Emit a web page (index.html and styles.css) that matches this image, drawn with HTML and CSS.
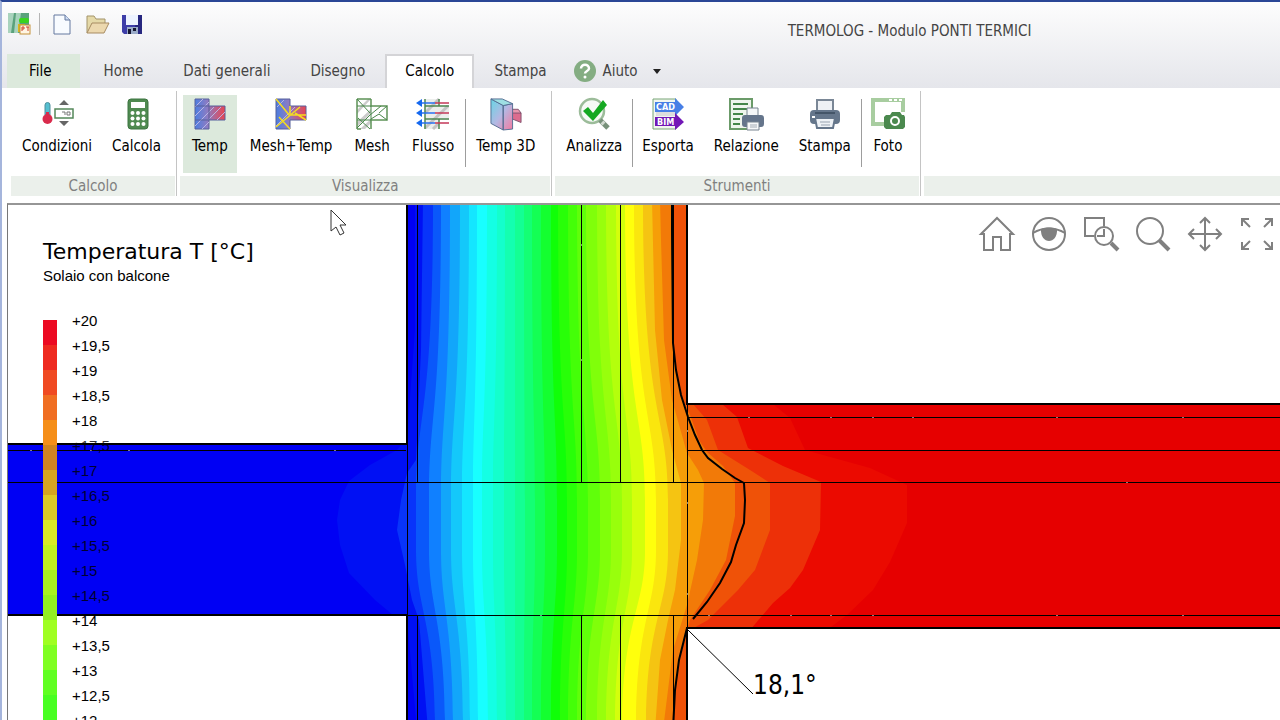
FILE: index.html
```html
<!DOCTYPE html>
<html lang="it">
<head>
<meta charset="utf-8">
<title>TERMOLOG - Modulo PONTI TERMICI</title>
<link rel="stylesheet" href="styles.css">
</head>
<body>
<div class="window">
  <header class="titlebar">
    <div class="quick">
      <svg class="app-logo" viewBox="0 0 24 24" width="24" height="24" role="img" aria-label="Termolog">
        <path d="M0 1h21v20H0z" fill="#5aa27c"/><path d="M0 1h6L3 21H0zM8 1h5l-3 20H6z" fill="#a9d3bd"/>
        <rect x="11" y="6" width="10" height="5" rx="2" fill="#39d41f"/><rect x="10" y="12" width="7" height="8" fill="#d8b81d"/>
        <rect x="12" y="13" width="10" height="9" fill="#fff5e3" stroke="#c4923b"/><path d="M14 19v-4h2v2h-2M18 15h3m-1 0v4" stroke="#cf432c" fill="none"/>
      </svg>
      <span class="quick-rule"></span>
      <button class="quick-btn" aria-label="Nuovo"><svg viewBox="0 0 24 24" width="24" height="24"><path d="M4 3h11l5 5v14H4z" fill="#f8fbff" stroke="#65789f"/><path d="M15 3v5h5" fill="#cddbf2" stroke="#65789f"/></svg></button>
      <button class="quick-btn" aria-label="Apri"><svg viewBox="0 0 24 24" width="24" height="24"><path d="M2 21V4h7l2 3h9v4" fill="#e5d9a8" stroke="#a3946b"/><path d="M2 21 7 11h17l-5 10z" fill="#ecd8ae" stroke="#a78b62"/></svg></button>
      <button class="quick-btn" aria-label="Salva"><svg viewBox="0 0 24 24" width="24" height="24"><path d="M2 3h20v19H4l-2-2z" fill="#3d3da8"/><path d="M18 3h4v19h-9z" fill="#27277f"/><path d="M6 3h12v10H6z" fill="#edf3ff"/><path d="M7 15h11v7H7z" fill="#9bacc9"/><path d="M8 17h3v5H8zM13 16h3v3h-3z" fill="#171733"/></svg></button>
    </div>
    <h1 class="title">TERMOLOG - Modulo PONTI TERMICI</h1>
  </header>

  <nav class="tabs">
    <button class="tab tab-file">File</button>
    <button class="tab">Home</button>
    <button class="tab">Dati generali</button>
    <button class="tab">Disegno</button>
    <button class="tab tab-active">Calcolo</button>
    <button class="tab">Stampa</button>
    <button class="tab tab-help">
      <svg viewBox="0 0 24 24" width="24" height="24"><circle cx="12" cy="12" r="11" fill="#84ad82"/><path d="M8 9.500c0-5 8-5 8 0 0 2.500-4 2.500-4 5" fill="none" stroke="#fff" stroke-width="2.500"/><circle cx="12" cy="18" r="1.500" fill="#fff"/></svg>
      Aiuto
      <svg class="caret" viewBox="0 0 8 5" width="8" height="5"><path d="M0 0h8L4 5z" fill="#222"/></svg>
    </button>
  </nav>

  <div class="ribbon">
    <section class="group">
      <div class="tools">
        <button class="tool"><svg viewBox="0 0 32 32" width="32" height="32"><path d="M4 7a2.500 2.500 0 0 1 5 0v10H4z" fill="#55bfd0" stroke="#4e8e9c"/><circle cx="6.500" cy="21" r="5" fill="#d92b4c"/><path d="M5 14h3v6H5z" fill="#d92b4c"/><path d="M23 2l5 5H18zM18 23h10l-5 5z" fill="#666"/><rect x="14" y="11" width="18" height="9" fill="#fff" stroke="#54885a" stroke-width="1.500"/><path d="M21 14h3v3m2-3h3v3h-3z" fill="none" stroke="#777"/></svg>Condizioni</button>
        <button class="tool"><svg viewBox="0 0 32 32" width="32" height="32"><rect x="7" y="1" width="20" height="30" rx="3" fill="#4f8a50" stroke="#3c7440"/><rect x="10" y="4" width="14" height="6" fill="#fff"/><g fill="#fff"><circle cx="11.500" cy="15" r="2"/><circle cx="17" cy="15" r="2"/><circle cx="22.500" cy="15" r="2"/><circle cx="11.500" cy="20.500" r="2"/><circle cx="17" cy="20.500" r="2"/><circle cx="22.500" cy="20.500" r="2"/><circle cx="11.500" cy="26" r="2"/><circle cx="17" cy="26" r="2"/><circle cx="22.500" cy="26" r="2"/></g></svg>Calcola</button>
      </div>
      <h2 class="group-name">Calcolo</h2>
    </section>

    <section class="group group-wide">
      <div class="tools">
        <button class="tool tool-on"><svg viewBox="0 0 32 32" width="32" height="32"><defs><linearGradient id="heat"><stop offset="0" stop-color="#4c7ee0"/><stop offset=".4" stop-color="#8a7cc4"/><stop offset="1" stop-color="#ea4450"/></linearGradient></defs><path d="M1 1h14v7h16v14H15v9H1z" fill="url(#heat)" stroke="#57619c"/><path d="M1 9l8-8M1 18 15 4M1 28 20 9M8 31l7-7M14 22 27 9M23 22l8-8" stroke="#b8b5e4"/><path d="M1 8h14v14H1" fill="none" stroke="#57619c"/></svg>Temp</button>
        <button class="tool"><svg viewBox="0 0 32 32" width="32" height="32"><path d="M1 1h14v7h16v14H15v9H1z" fill="url(#heat)" stroke="#57619c"/><path d="M1 28 20 9M2 9l7-7" stroke="#b8b5e4"/><path d="M1 1l14 17M1 29 25 9M4 19l11 12M14 17h17M20 15l11 7M15 8v8" fill="none" stroke="#f5dc20" stroke-width="1.500"/></svg>Mesh+Temp</button>
        <button class="tool"><svg viewBox="0 0 32 32" width="32" height="32"><path d="M1 12 12 1h3L1 16zM1 24 15 11v4L1 29zM4 31l11-10v4l-6 6z" fill="#ccc"/><path d="M1 31V1M1 1h14M1 31h4M15 31v-9h16V8H15V1" fill="none" stroke="#5d9357" stroke-width="1.500"/><path d="M1 1l13 14M1 30 14 17 25 8M2 20l12 11M1 8h14v14H1M15 21l8-5 8 6M23 15l8-7" fill="none" stroke="#48864a"/></svg>Mesh</button>
        <button class="tool"><svg viewBox="0 0 32 32" width="32" height="32"><path d="M8 1h14v30H8zM22 8h10v14H22z" fill="#eceeec"/><path d="M8 15 22 1M8 30 31 8M16 31l6-6" stroke="#c4c4c4" stroke-width="3"/><path d="M8 1v30M22 1v7h10M8 8h14M8 21h24M22 21v10" fill="none" stroke="#4c8550" stroke-width="1.500"/><path d="M5 5h13M5 15h13M5 25h13" stroke="#2870ef" stroke-width="1.500"/><path d="M18 5h14M18 15h14M18 25h14" stroke="#c33958" stroke-width="1.500"/><path d="M-1 5l6-4v8zM-1 15l6-4v8zM-1 25l6-4v8z" fill="#1468ef"/></svg>Flusso</button>
        <span class="tool-rule"></span>
        <button class="tool"><svg viewBox="0 0 34 34" width="34" height="34"><defs><linearGradient id="solid" x2="1" y2="1"><stop offset="0" stop-color="#67d6e4"/><stop offset=".5" stop-color="#b4b8e3"/><stop offset="1" stop-color="#f57a9f"/></linearGradient></defs><path d="M23 12l10 4v10l-10-4z" fill="#dd6c8e" stroke="#81516d"/><path d="M23 12h7l3 4H23z" fill="#e997ae" stroke="#81516d"/><path d="M1 1l13 7v26L1 27zM14 8l10-2v27l-10 1z" fill="url(#solid)" stroke="#526c91"/><path d="M1 1h12l11 5-10 2z" fill="#9edfe3" stroke="#526c91"/></svg>Temp 3D</button>
      </div>
      <h2 class="group-name">Visualizza</h2>
    </section>

    <section class="group">
      <div class="tools">
        <button class="tool"><svg viewBox="0 0 32 32" width="32" height="32"><circle cx="14" cy="13" r="12" fill="#f6f9f6" stroke="#9cbc9a" stroke-width="2.500"/><path d="M22 22l8 8" stroke="#77917a" stroke-width="5"/><path d="M24 24l2 2" stroke="#d1d9d0" stroke-width="4"/><path d="M5 13l5-4 5 6L25 2l4 5-14 16z" fill="#15a822"/></svg>Analizza</button>
        <span class="tool-rule"></span>
        <button class="tool"><svg viewBox="0 0 32 32" width="32" height="32"><path d="M1 1h23v30H1z" fill="#f1f6ef" stroke="#79a577"/><path d="M4 14h19v4H4z" fill="#ddd"/><path d="M3 4h20V0l9 9-9 9v-4H3z" fill="#477fe6"/><path d="M3 19h20v-4l9 9-9 8v-4H3z" fill="#7217b6"/><g class="badge-text"><text x="4" y="12">CAD</text><text x="5" y="27">BIM</text></g></svg>Esporta</button>
        <button class="tool"><svg viewBox="0 0 36 32" width="36" height="32"><path d="M2 1h22v30H2z" fill="#eff5ed" stroke="#6b9b69" stroke-width="2"/><path d="M5 6h15M5 11h15M5 16h10M5 21h7M5 26h7" stroke="#458649" stroke-width="2"/><path d="M19 10h11v9H19z" fill="#f5f7f8" stroke="#798490"/><rect x="14" y="17" width="22" height="12" rx="3" fill="#65758b"/><path d="M19 24h12v8H19z" fill="#f7f8f9" stroke="#798490"/><path d="M22 27h7m-7 2h7" stroke="#a4acb5"/></svg>Relazione</button>
        <button class="tool"><svg viewBox="0 0 32 32" width="32" height="32"><path d="M8 2h16v13H8z" fill="#eef1f5" stroke="#7a8796" stroke-width="2"/><rect x="1" y="12" width="30" height="14" rx="4" fill="#65768b"/><path d="M6 20h20l-2 10H8z" fill="#eef2f6" stroke="#65768b" stroke-width="2"/><path d="M11 24h10m-9 3h9" stroke="#97a2b0"/><path d="M3 18h3v2H3z" fill="#fff"/><path d="M6 15h20" stroke="#445568" stroke-width="2"/></svg>Stampa</button>
        <span class="tool-rule"></span>
        <button class="tool"><svg viewBox="0 0 34 32" width="34" height="32"><path d="M2 13V2h30v12M2 2v24h11" fill="none" stroke="#a8cda0" stroke-width="4"/><path d="M18 2h3m2 0h3m2 0h3" stroke="#fff" stroke-width="2"/><path d="M15 17h4l2-3h8l2 3h2l1 2v10l-2 2H15l-2-2V19z" fill="#4b894e"/><circle cx="24" cy="23" r="4" fill="#4b894e" stroke="#fff" stroke-width="2"/></svg>Foto</button>
      </div>
      <h2 class="group-name">Strumenti</h2>
    </section>
    <section class="group group-rest"><div class="tools"></div><div class="group-name"></div></section>
  </div>

  <main class="canvas">
    <svg class="plot" viewBox="8 205 1272 515" preserveAspectRatio="xMinYMin slice" role="img" aria-label="Campo di temperatura del solaio con balcone">
      <defs><clipPath id="section"><path d="M8 444H406V200H687V404H1290V628H687V730H406V615H8z"/></clipPath></defs>
      <g clip-path="url(#section)"><rect x="8" y="200" width="1280" height="530" fill="#0000f4"/><g id="bands"></g></g>
      <path class="lines" d="M8 482.500H1290M8 450.500H406M687 417.500H1290M687 450.500H1290M407 615.500H1290M417.500 200V482M417.500 615V730M581.500 200V482M581.500 615V730M620.500 200V482M620.500 615V730M673.500 200V482M673.500 615V730M407.500 444V615M687.500 404V628"/>
      <path class="joints" d="M30 450.500h2M90 450.500h2M128 450.500h2M334 450.500h2M748 417.500h2M830 417.500h2M872 417.500h2M912 417.500h2M708 615.500h2M790 615.500h2M830 615.500h2M872 615.500h2M1056 417.500h2M1182 417.500h2M1056 615.500h2M1182 615.500h2M1126 482.500h2M540 615.500h2M581.500 244v2M581.500 359v2M687.500 430v2M687.500 502v2M687.500 593v2"/>
      <path class="outline" d="M8 444H407V200M687 200V404H1290M1290 628H687V730M407 730V615H8"/>
      <path class="isotherm" d="M672 200V230L673 343 676 370 681 395 688 417 695 435 702 450 708 458 722 469 735 478 744 483 745 500 744 523 736 545 731 562 720 583 707 602 693 619M687 628L679 660 675 690 673 730"/>
      <path d="M687 629L753 694" stroke="#000" fill="none"/>
      <text class="reading" x="753" y="694">18,1°</text>
    </svg>

    <div class="legend">
      <h2 class="legend-title">Temperatura T [°C]</h2>
      <p class="legend-sub">Solaio con balcone</p>
      <div class="scale">
        <div class="swatches" id="swatches"></div>
        <ul class="values">
          <li>+20</li><li>+19,5</li><li>+19</li><li>+18,5</li><li>+18</li><li class="dim">+17,5</li><li class="dim">+17</li><li class="dim">+16,5</li><li class="dim">+16</li><li class="dim">+15,5</li><li class="dim">+15</li><li class="dim">+14,5</li><li>+14</li><li>+13,5</li><li>+13</li><li>+12,5</li><li>+12</li>
        </ul>
      </div>
    </div>

    <div class="view-tools">
      <button aria-label="Inizio"><svg viewBox="0 0 36 36"><path d="M2 18 18 2l16 16h-3v16h-9V21h-8v13H5V18z"/></svg></button>
      <button aria-label="Vista"><svg viewBox="0 0 36 36"><circle cx="18" cy="18" r="16"/><path d="M2 17c10-6 22-6 32 0"/><path class="full" d="M10 13c5-2 11-2 16 0 1 16-17 16-16 0z"/></svg></button>
      <button aria-label="Zoom finestra"><svg viewBox="0 0 36 36"><path d="M11 20H2V2h19v8M14 20h7v-7"/><circle cx="21" cy="20" r="9"/><path class="thick" d="M28 27l7 7"/></svg></button>
      <button aria-label="Zoom"><svg viewBox="0 0 36 36"><circle cx="15" cy="15" r="13"/><path class="thick" d="M24 24l10 10"/></svg></button>
      <button aria-label="Sposta"><svg viewBox="0 0 36 36"><path d="M18 2v32M2 18h32M13 7l5-5 5 5M13 29l5 5 5-5M7 13l-5 5 5 5M29 13l5 5-5 5"/></svg></button>
      <button aria-label="Adatta"><svg viewBox="0 0 36 36"><g class="heavy"><path d="M11 11 3 3M3 10V3h7M25 11l8-8M26 3h7v7M11 25l-8 8M3 26v7h7M25 25l8 8M26 33h7v-7"/></g></svg></button>
    </div>
    <svg class="pointer" viewBox="0 0 18 28" width="18" height="28"><path d="M1 1v21l5-4 4 8 4-2-4-8h6z" fill="#fff" stroke="#333"/></svg>
  </main>
</div>
<script src="plot.js"></script>
</body>
</html>
```

FILE: styles.css
```css
* { box-sizing: border-box; }
body { margin: 0; font-family: "DejaVu Sans Condensed", "DejaVu Sans", sans-serif; font-size: 15px; color: #111; }
button { border: 0; padding: 0; background: none; font: inherit; color: inherit; }
h1, h2, p, ul { margin: 0; padding: 0; font-weight: normal; list-style: none; }
svg { display: block; overflow: visible; }

.window { display: flex; flex-direction: column; height: 100vh; overflow: hidden; border-top: 2px solid #2b4796; border-left: 2px solid #a5b5dc; background: linear-gradient(#fdfdfd, #e5e6eb 86px, #fff 86px); }
.titlebar { display: flex; align-items: center; height: 52px; padding-left: 6px; }
.quick { display: flex; align-items: center; height: 44px; align-self: start; }
.quick-rule { width: 1px; height: 22px; margin: 0 10px 0 7px; background: #b5b5b5; }
.quick-btn { margin-right: 11px; }
.title { flex: 1; padding: 5px 100px 0 484px; text-align: center; font-size: 15px; color: #444; white-space: nowrap; }

.tabs { display: flex; height: 34px; padding-left: 5px; color: #444; }
.tab { padding: 0 20px; white-space: nowrap; }
.tab-file { padding: 0 29px 0 22px; background: #dce9dc; color: #000; margin-right: 3px; }
.tab-active { border: 2px solid #d4d4d7; border-bottom: 0; padding: 0 18px 2px; background: #fff; color: #000; }
.tab-help { display: flex; align-items: center; gap: 6px; padding-left: 6px; }
.caret { margin-left: 9px; }

.ribbon { display: flex; height: 115px; padding: 3px 0 7px 9px; background: #fff; }
.group { display: flex; flex-direction: column; justify-content: space-between; border-right: 1px solid #c4c4c4; margin-right: 3px; padding-right: 1px; }
.group-rest { flex: 1; border: 0; margin: 0; padding: 0; }
.tools { display: flex; gap: 4px; padding: 4px 6px 0 3px; height: 82px; }
.tool { display: flex; flex-direction: column; align-items: center; gap: 7px; padding: 3px 8px 0; height: 78px; white-space: nowrap; line-height: 18px; color: #000; }
.group-wide .tool { padding: 3px 9px 0; }
.tool svg { height: 32px; }
.tool-on { background: #dce9dc; }
.tool-rule { width: 1px; margin: 4px -3px 6px -2px; background: #9d9d9d; }
.group-name { height: 20px; background: #ebf0eb; color: #808080; font-size: 15px; line-height: 20px; text-align: center; }
.badge-text { font: bold 9px "DejaVu Sans Condensed", sans-serif; fill: #fff; }

.canvas { position: relative; flex: 1; min-height: 0; margin-left: 5px; overflow: hidden; border-top: 2px solid #969696; border-left: 1px solid #777; background: #fff; }
.plot { width: 100%; height: 100%; }
.lines { fill: none; stroke: #000; shape-rendering: crispEdges; }
.joints { stroke: #fff; stroke-opacity: .5; }
.outline { fill: none; stroke: #000; stroke-width: 2; }
.isotherm { fill: none; stroke: #000; stroke-width: 2; }
.reading { font-size: 26px; fill: #000; }

.legend { position: absolute; top: 33px; left: 35px; font-family: "Liberation Sans", sans-serif; color: #000; }
.legend-title { font-family: "DejaVu Sans", sans-serif; font-size: 22px; line-height: 28px; white-space: nowrap; }
.legend-sub { font-size: 15px; line-height: 20px; }
.scale { display: flex; gap: 15px; margin-top: 22px; font-size: 15px; }
.swatches { width: 14px; padding-top: 12px; }
.swatch { height: 25px; }
.values li { height: 25px; line-height: 25px; }
.dim { opacity: .8; }

.view-tools { position: absolute; top: 11px; right: 5px; display: flex; gap: 16px; }
.view-tools svg { width: 36px; height: 36px; fill: none; stroke: #808080; stroke-width: 2; }
.view-tools .full { fill: #808080; stroke: none; }
.view-tools .thick { stroke-width: 4; }
.view-tools .heavy { stroke-width: 2; }
.pointer { position: absolute; left: 322px; top: 4px; }
```

FILE: plot.js
```js
// Isotherm bands of the wall: [x at the top, x at slab level, x at the bottom, colour]
const wall = [
  [433, 416, 435, '#0a58fa'], [441, 429, 445, '#1080ff'], [450, 441, 453, '#12a6fa'],
  [460, 451, 463, '#14c8fa'], [469, 462, 470, '#14e6ff'], [477, 473, 478, '#18ffff'],
  [487, 482, 488, '#14ffe4'], [497, 493, 497, '#14ffcc'], [505, 504, 506, '#14ffb0'],
  [515, 515, 515, '#14ff94'], [524, 525, 524, '#14ff74'], [532, 535, 532, '#14ff54'],
  [541, 545, 541, '#14ff30'], [551, 557, 551, '#10ff08'], [558, 567, 560, '#28ff08'],
  [568, 577, 568, '#44ff08'], [577, 588, 577, '#60ff0a'], [586, 600, 586, '#80ff0a'],
  [597, 611, 597, '#98ff0c'], [606, 622, 606, '#b4ff0c'], [616, 632, 615, '#d4ff0c'],
  [625, 645, 622, '#ffff0c'], [634, 656, 636, '#fae60e'], [643, 668, 646, '#f5c412']
];

// Bands that spread into the slabs, as boundary points from top to bottom
const slab = [
  ['#f69e08', '652,200 655,330 662,400 672,450 681,483 681,540 675,590 668,620 660,660 655,730'],
  ['#f27a08', '660,200 661,240 664,340 672,400 687,453 698,470 704,483 703,520 697,560 687,605 673,650 663,730'],
  ['#ef5208', '671,200 673,343 680,395 690,415 699,440 707,452 723,466 735,483 735,516 726,560 710,590 690,620 682,650 674,690 672,730'],
  ['#ed3008', '687,404 693,404 707,420 718,450 750,470 770,483 770,530 755,570 738,590 708,620 690,630'],
  ['#eb0a00', '722,404 737,417 748,448 783,466 821,482 820,530 803,570 790,588 773,603 750,630'],
  ['#e60000', '773,404 790,418 805,450 870,468 907,485 907,523 890,562 873,590 847,615 827,630']
];

const balcony = [
  ['#0010f4', '415,200 415,330 407,438 397,450 370,465 349,481 340,500 337,520 340,545 349,573 375,600 393,615 407,618 417,730'],
  ['#0834fa', '423,200 421,350 416,460 407,473 401,500 397,530 405,565 412,600 419,620 428,730']
];

const bands = document.getElementById('bands');
function band(d, colour) {
  const path = document.createElementNS('http://www.w3.org/2000/svg', 'path');
  path.setAttribute('d', d);
  path.setAttribute('fill', colour);
  bands.appendChild(path);
}
const polygon = ([colour, points]) => band(`M${points} L1290,730 1290,200z`, colour);

balcony.forEach(polygon);
wall.forEach(([top, mid, low, colour]) =>
  band(`M${top} 200C${top} 420 ${mid} 410 ${mid} 500V550C${mid} 610 ${low} 620 ${low} 730H1290V200z`, colour));
slab.forEach(polygon);

const scale = ['#ec0a22', '#ee2a20', '#f04a22', '#f06e22', '#f58f1a', '#d08420', '#d4a422', '#dcc828',
  '#d8e828', '#c0f022', '#a8f022', '#92ee22', '#a0ff22', '#80ff22', '#60ff22', '#48ff22'];
const swatches = document.getElementById('swatches');
scale.forEach(colour => {
  const cell = document.createElement('div');
  cell.className = 'swatch';
  cell.style.background = colour;
  swatches.appendChild(cell);
});
```
